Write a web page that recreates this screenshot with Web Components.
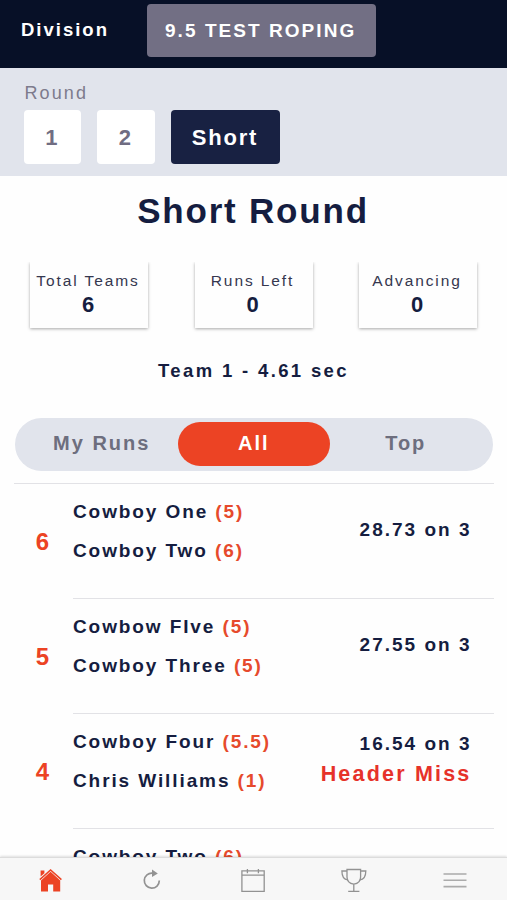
<!DOCTYPE html>
<html lang="en">
<head>
<meta charset="utf-8">
<title>Short Round</title>
<style>
    html, body {
        margin: 0;
        height: 100%;
    }

    body {
        overflow: hidden;
        background: #fefefe;
        color: #151d40;
        font-family: "Liberation Sans", Arial, Helvetica, sans-serif;
    }
</style>
</head>
<body>
<roping-app></roping-app>

<script>
    (function () {
        'use strict';

        const define = (name, html) => {
            const template = document.createElement('template');
            template.innerHTML = html;

            customElements.define(name, class extends HTMLElement {
                constructor() {
                    super();
                    this.attachShadow({mode: 'open'}).appendChild(template.content.cloneNode(true));
                }
            });
        };

        define('division-bar', `
            <style>
                :host {
                    display: flex;
                    box-sizing: border-box;
                    height: 68px;
                    padding: 3.5px 0 11.5px 21px;
                    align-items: center;
                    background: #071027;
                    color: #fff;
                    font-weight: bold;
                }
                .label {
                    width: 126px;
                    font-size: 18.5px;
                    line-height: 24px;
                    letter-spacing: 2px;
                }
                .value {
                    box-sizing: border-box;
                    width: 228.5px;
                    height: 53px;
                    padding-left: 18px;
                    border-radius: 4px;
                    background: #726f84;
                    font-size: 19px;
                    line-height: 53px;
                    letter-spacing: 2.05px;
                    white-space: nowrap;
                }
            </style>
            <div class="label">Division</div>
            <div class="value"><slot></slot></div>
        `);

        define('round-button', `
            <style>
                :host {
                    display: block;
                    width: 57.5px;
                    height: 53.5px;
                    border-radius: 4px;
                    background: #fff;
                    color: #706d82;
                    font-size: 22px;
                    font-weight: bold;
                    line-height: 55px;
                    letter-spacing: 1.8px;
                    text-align: center;
                }
                :host([active]) {
                    width: 109px;
                    background: #182142;
                    color: #fff;
                }
            </style>
            <slot></slot>
        `);

        define('round-picker', `
            <style>
                :host {
                    display: block;
                    box-sizing: border-box;
                    height: 108px;
                    padding: 15px 24px 0 23.5px;
                    background: #e1e4ec;
                }
                .label {
                    height: 27px;
                    padding-left: 1px;
                    color: #7d7b8c;
                    font-size: 18px;
                    line-height: 20px;
                    letter-spacing: 2.1px;
                }
                .buttons {
                    display: flex;
                    gap: 16px;
                }
            </style>
            <div class="label">Round</div>
            <div class="buttons"><slot></slot></div>
        `);

        define('stat-card', `
            <style>
                :host {
                    display: block;
                    box-sizing: border-box;
                    width: 118px;
                    height: 66px;
                    padding: 9px 2px 0 0;
                    background: #fefefe;
                    box-shadow: 0 1px 3px rgba(0, 0, 0, .34);
                    clip-path: inset(0 -5px -6px -5px);
                    text-align: center;
                    white-space: nowrap;
                }
                .label {
                    color: #35374f;
                    font-size: 15.5px;
                    line-height: 20px;
                    letter-spacing: 1.9px;
                }
                .value {
                    font-size: 22px;
                    font-weight: bold;
                    line-height: 28px;
                }
            </style>
            <div class="label"><slot name="label"></slot></div>
            <div class="value"><slot></slot></div>
        `);

        define('filter-tab', `
            <style>
                :host {
                    display: block;
                    height: 44px;
                    border-radius: 22px;
                    color: #6d6e7e;
                    font-size: 20px;
                    font-weight: bold;
                    line-height: 42px;
                    letter-spacing: 2px;
                    text-align: center;
                }
                :host([active]) {
                    background: #ec4324;
                    color: #fff;
                }
            </style>
            <slot></slot>
        `);

        define('filter-tabs', `
            <style>
                :host {
                    display: grid;
                    grid-template-columns: 152px 152px 152px;
                    box-sizing: border-box;
                    height: 53.5px;
                    margin: 0 14px 0 14.5px;
                    justify-content: center;
                    align-items: center;
                    border-radius: 27px;
                    background: #e1e4ec;
                }
            </style>
            <slot></slot>
        `);

        define('tab-bar', `
            <style>
                :host {
                    display: grid;
                    grid-template-columns: repeat(5, 101px);
                    box-sizing: border-box;
                    height: 43px;
                    padding-top: 4px;
                    border-top: 1px solid #dcdcdc;
                    background: #f7f7f7;
                    box-shadow: 0 -1px 2px rgba(0, 0, 0, .12);
                    justify-items: center;
                    align-items: center;
                }
                svg {
                    display: block;
                    fill: none;
                    stroke: #929292;
                    stroke-width: 1.3;
                }
                .home {
                    fill: #ec4324;
                    stroke: none;
                }
            </style>
            <svg class="home" width="26" height="26" viewBox="0 0 26 26">
                <path d="M2.6 2.6H6.4V5.2L2.6 8.6Z"/>
                <path d="M12.6 1 23.9 11 22.9 12.3 12.6 3.1 2.3 12.3 1.3 11Z"/>
                <path d="M12.6 3.8 22.2 12.4V23.4H15.2V16.4H10V23.4H3V12.4Z"/>
            </svg>
            <svg width="26" height="26" viewBox="0 0 26 26">
                <path d="M13.6 5.2A7.5 7.5 0 1 0 20.3 12.6" stroke-width="1.7"/>
                <path d="M13 1.6 18.8 5.4 13 9Z" fill="#929292" stroke="none"/>
            </svg>
            <svg width="26" height="26" viewBox="0 0 26 26">
                <path d="M1.9 2.9H24.2V23.4H1.9ZM1.9 7.2H24.2M7.4 1V5.2M18.4 1V5.2"/>
            </svg>
            <svg width="26" height="26" viewBox="0 0 26 26">
                <path d="M6 1.5H19.6V9C19.6 13 16.6 15.6 12.8 16.2C9 15.6 6 13 6 9ZM12.8 16.2V23.3M7.2 23.3H18.4"/>
                <path d="M6 3H.9C.9 8.5 2.8 11.5 6.8 11.8M19.6 3H24.8C24.8 8.5 22.8 11.5 18.8 11.8"/>
            </svg>
            <svg width="26" height="26" viewBox="0 0 26 26">
                <path d="M1.5 6H24.5M1.5 12.3H24.5M1.5 18.6H24.5" stroke="#ababab" stroke-width="1.6"/>
            </svg>
        `);

        customElements.define('run-row', class extends HTMLElement {
            constructor() {
                super();

                this.attachShadow({mode: 'open'}).innerHTML = `
                    <style>
                        :host {
                            display: grid;
                            grid-template-columns: 58px 1fr;
                            height: 115px;
                            margin: 0 13px 0 15px;
                            font-weight: bold;
                        }
                        .rank {
                            padding: 44px 3px 0 0;
                            color: #ec4324;
                            font-size: 24px;
                            line-height: 28px;
                            text-align: center;
                        }
                        .body {
                            display: flex;
                            justify-content: space-between;
                            border-bottom: 1px solid #e2e2e6;
                            font-size: 19px;
                            line-height: 39px;
                            letter-spacing: 1.9px;
                            white-space: nowrap;
                        }
                        .names {
                            padding-top: 7.5px;
                        }
                        .names span {
                            color: #e64a2c;
                        }
                        .result {
                            display: flex;
                            box-sizing: border-box;
                            height: 91px;
                            padding-right: 22.5px;
                            flex-direction: column;
                            justify-content: center;
                            line-height: 30px;
                            letter-spacing: 2px;
                            text-align: right;
                        }
                        .miss {
                            color: #e6322a;
                            font-size: 21.5px;
                            line-height: 31px;
                            letter-spacing: 2.2px;
                        }
                    </style>
                    <div class="rank"></div>
                    <div class="body">
                        <div class="names"></div>
                        <div class="result"></div>
                    </div>
                `;
            }

            connectedCallback() {
                const root = this.shadowRoot;
                const names = ['header', 'heeler'].filter((key) => this.hasAttribute(key));
                const time = this.getAttribute('time');
                const miss = this.getAttribute('miss');

                root.querySelector('.rank').textContent = this.getAttribute('rank');
                root.querySelector('.names').innerHTML = names.map((key) => {
                    return `<div>${this.getAttribute(key)} <span>(${this.getAttribute(key + '-no')})</span></div>`;
                }).join('');
                root.querySelector('.result').innerHTML =
                    (time ? `<div>${time}</div>` : '') + (miss ? `<div class="miss">${miss}</div>` : '');
            }
        });

        define('roping-app', `
            <style>
                :host {
                    display: flex;
                    height: 900px;
                    flex-direction: column;
                }
                main {
                    flex: 1;
                    min-height: 0;
                    overflow: hidden;
                }
                h1 {
                    margin: 0;
                    padding: 15px 1px 0 0;
                    font-size: 35px;
                    line-height: 40px;
                    letter-spacing: 1.8px;
                    text-align: center;
                }
                .stats {
                    display: flex;
                    padding: 31px 30px 0;
                    justify-content: space-between;
                }
                .best {
                    height: 59.5px;
                    padding-top: 30px;
                    font-size: 18.5px;
                    font-weight: bold;
                    line-height: 25px;
                    letter-spacing: 2.35px;
                    text-align: center;
                }
                .runs {
                    margin-top: 12px;
                }
                .line {
                    height: 1px;
                    margin: 0 13px 0 14px;
                    background: #e2e2e6;
                }
                tab-bar {
                    position: relative;
                }
            </style>
            <division-bar>9.5 TEST ROPING</division-bar>
            <round-picker>
                <round-button>1</round-button>
                <round-button>2</round-button>
                <round-button active>Short</round-button>
            </round-picker>
            <main>
                <h1>Short Round</h1>
                <div class="stats">
                    <stat-card><span slot="label">Total Teams</span>6</stat-card>
                    <stat-card><span slot="label">Runs Left</span>0</stat-card>
                    <stat-card><span slot="label">Advancing</span>0</stat-card>
                </div>
                <div class="best">Team 1 - 4.61 sec</div>
                <filter-tabs>
                    <filter-tab>My Runs</filter-tab>
                    <filter-tab active>All</filter-tab>
                    <filter-tab>Top</filter-tab>
                </filter-tabs>
                <div class="runs">
                    <div class="line"></div>
                    <run-row rank="6" header="Cowboy One" header-no="5" heeler="Cowboy Two" heeler-no="6" time="28.73 on 3"></run-row>
                    <run-row rank="5" header="Cowbow FIve" header-no="5" heeler="Cowboy Three" heeler-no="5" time="27.55 on 3"></run-row>
                    <run-row rank="4" header="Cowboy Four" header-no="5.5" heeler="Chris Williams" heeler-no="1" time="16.54 on 3" miss="Header Miss"></run-row>
                    <run-row header="Cowboy Two" header-no="6"></run-row>
                </div>
            </main>
            <tab-bar></tab-bar>
        `);
    })();
</script>
</body>
</html>
